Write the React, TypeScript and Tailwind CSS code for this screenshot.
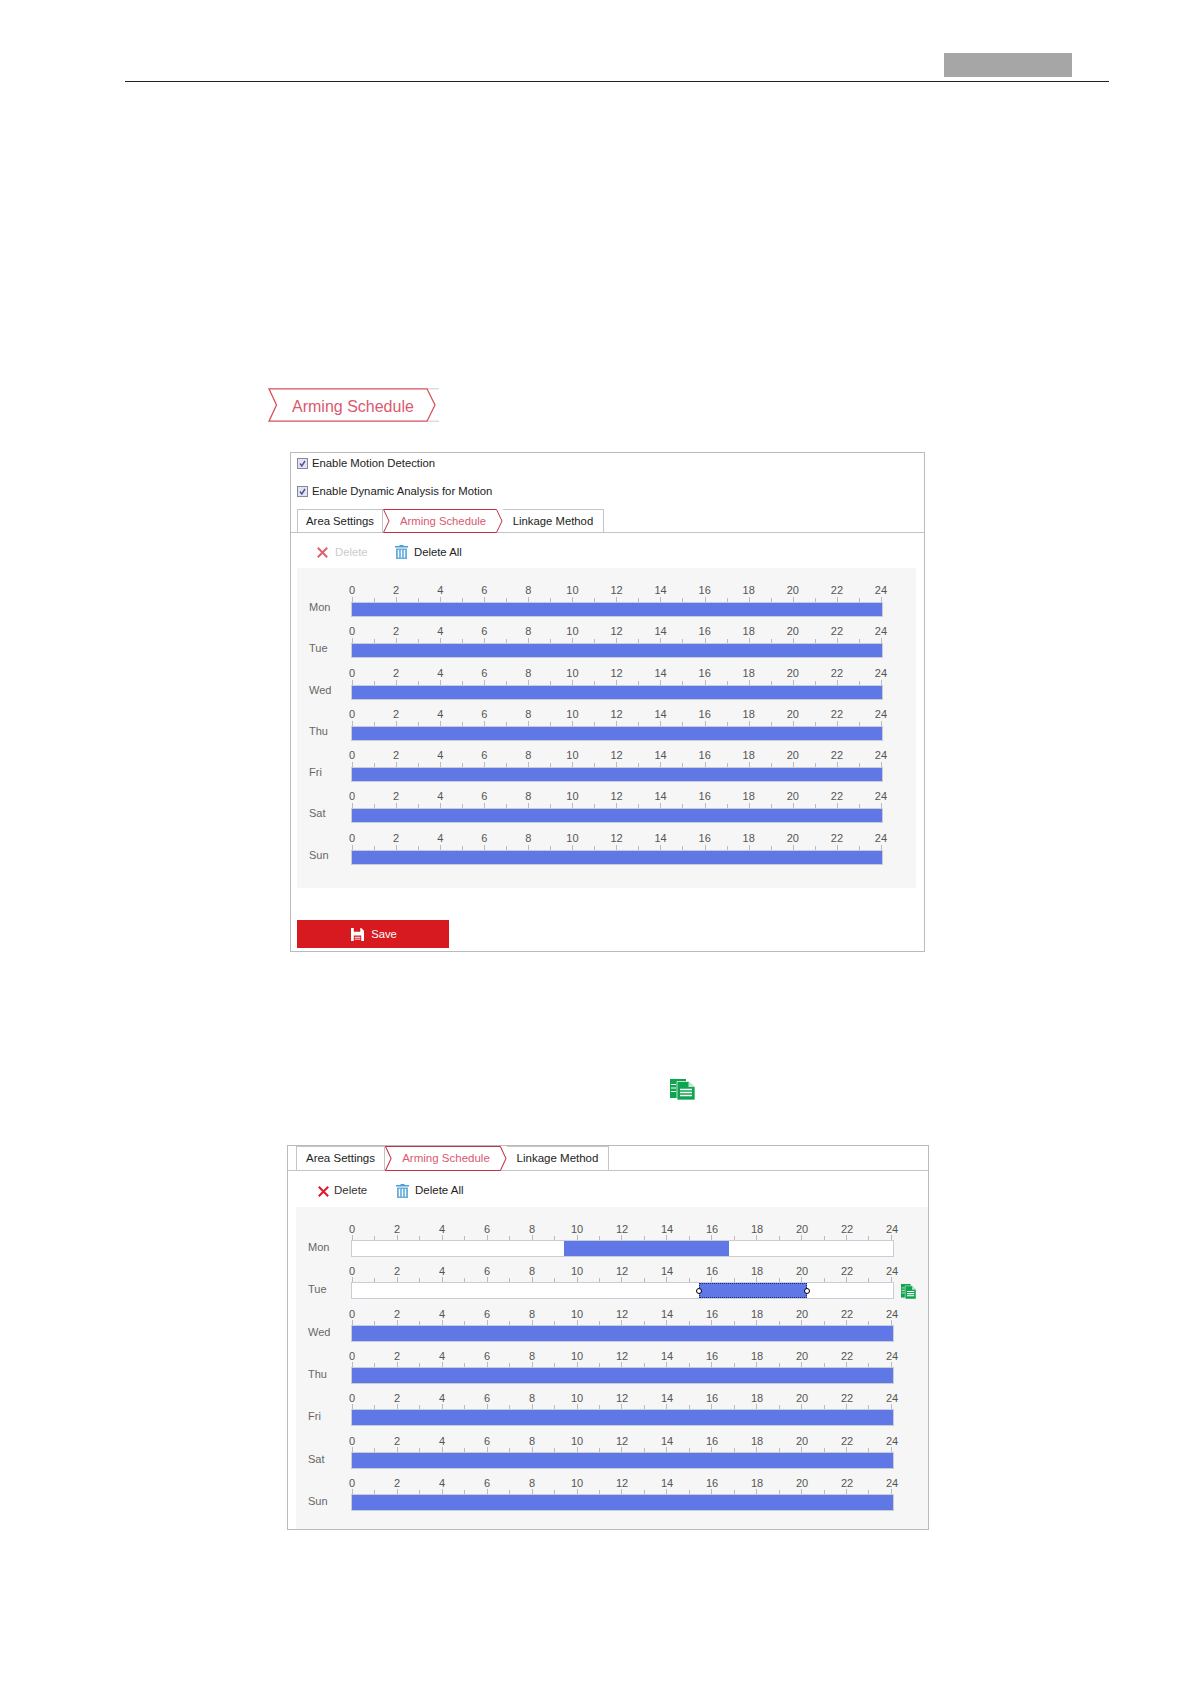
import type { ReactNode } from 'react';

const HOURS = [0, 2, 4, 6, 8, 10, 12, 14, 16, 18, 20, 22, 24];
const DAYS = ['Mon', 'Tue', 'Wed', 'Thu', 'Fri', 'Sat', 'Sun'];

const CopyIcon = ({ className }: { className: string }) => (
  <svg viewBox="0 0 25 21" preserveAspectRatio="none" className={className}>
    <path d="M0 0h16v19H0z" fill="#10a450" />
    <path d="M1 5.5h5M1 9h5M1 12.5h5" stroke="#fff" strokeWidth="1.1" />
    <path d="M7 2.5h11.5L25 8v13H7z" fill="#10a450" stroke="#fff" strokeWidth="0.7" />
    <path d="M18.5 3v5H25z" fill="#bfe8cf" />
    <path d="M10 10.5h12M10 13.5h12M10 16.5h12" stroke="#fff" strokeWidth="1.5" />
  </svg>
);

const CheckBox = () => (
  <svg viewBox="0 0 11 11" className="mr-[4px] h-[11px] w-[11px] shrink-0">
    <rect x="0.5" y="0.5" width="10" height="10" fill="#e3e4ef" stroke="#85879a" />
    <path d="M3 5.5L4.8 8L8 3" fill="none" stroke="#4b4f9c" strokeWidth="1.4" />
  </svg>
);

const DeleteIcon = ({ enabled }: { enabled: boolean }) => (
  <svg viewBox="0 0 11 11" className="h-[11px] w-[11px] shrink-0">
    <path d="M0.8 0.8L10.2 10.2M10.2 0.8L0.8 10.2" fill="none" stroke={enabled ? '#e0182d' : '#e0606f'} strokeWidth="2" />
  </svg>
);

const TrashIcon = () => (
  <svg viewBox="0 0 13 14" className="h-[14px] w-[13px] shrink-0">
    <path d="M4.5 0h4v1H13v1.5H0V1h4.5z" fill="#4f9fd6" />
    <path d="M1 3.5h11V14H1z" fill="#6aaedd" />
    <path d="M3.5 5v7.5M6.5 5v7.5M9.5 5v7.5" stroke="#fff" strokeWidth="1.3" />
  </svg>
);

const Tab = ({ children, className }: { children: string; className: string }) => (
  <div className={`flex items-center justify-center text-[#222] ${className}`}>{children}</div>
);

const ActiveTab = ({ children, className }: { children: string; className: string }) => (
  <div className={`relative flex items-center justify-center text-[#d9596f] ${className}`}>
    <svg viewBox="0 0 120 24" preserveAspectRatio="none" className="absolute inset-0 h-full w-full">
      <path d="M0.5 0.5H113.5L119 12L113.5 23.5H0.5L6 12Z" fill="#fff" stroke="#bf3348" />
    </svg>
    <span className="relative">{children}</span>
  </div>
);

const Ticks = ({ className }: { className: string }) => (
  <div className={`flex items-end justify-between ${className}`}>
    {Array.from({ length: 25 }, (_, i) => (
      <div key={i} className={`w-px bg-[#bbb] ${i % 2 === 0 ? 'h-[5px]' : 'h-[4px]'}`} />
    ))}
  </div>
);

interface RowProps {
  day: string;
  wide?: boolean;
  children?: ReactNode;
  extra?: ReactNode;
}

const ScheduleRow = ({ day, wide, children, extra }: RowProps) => (
  <div className="flex">
    <div
      className={`shrink-0 pl-[12px] text-[11px] leading-[16px] text-[#666] ${
        wide ? 'w-[55px] pt-[17px]' : 'w-[54px] pt-[16px]'
      }`}
    >
      {day}
    </div>
    <div className={wide ? 'w-[543px]' : 'w-[532px]'}>
      <div className={`flex h-[14px] text-center text-[11px] leading-[14px] text-[#555] ${wide ? '-ml-[21.5px]' : '-ml-[21px]'}`}>
        {HOURS.map((h) => (
          <span key={h} className={`shrink-0 ${wide ? 'w-[45px]' : 'w-[44.08px]'}`}>
            {h}
          </span>
        ))}
      </div>
      <Ticks className={wide ? 'ml-px h-[4px] w-[540px]' : 'ml-px h-[5px] w-[530px]'} />
      <div className={`flex border border-[#c8cdd8] bg-white ${wide ? 'h-[17px]' : 'h-[15px]'}`}>
        {children ?? <div className="w-full bg-[#5f78e6]" />}
      </div>
    </div>
    {extra}
  </div>
);

const Handle = ({ className }: { className: string }) => (
  <div className={`absolute top-1/2 h-[6px] w-[6px] -translate-y-1/2 rounded-full border border-black bg-white ${className}`} />
);

export default function App() {
  return (
    <div className="h-[1684px] overflow-hidden bg-white [font-family:'Liberation_Sans',Arial,sans-serif]">
      {/* page header */}
      <div className="ml-[125px] h-[82px] w-[984px] border-b border-[#222] pt-[53px]">
        <div className="ml-[819px] h-[24px] w-[128px] bg-[#a6a6a6]" />
      </div>

      {/* section chip */}
      <div className="relative ml-[268px] mt-[306px] flex h-[34px] w-[171px] items-center pl-[24px] pt-[3px] text-[16px] text-[#d9596f]">
        <svg viewBox="0 0 171 34" className="absolute inset-0 h-full w-full">
          <path d="M159 0.8H171M159 33.2H171" stroke="#ccc" fill="none" />
          <path d="M1 0.8H159L167 17L159 33.2H1L8.5 17Z" fill="none" stroke="#d9505f" strokeWidth="1.3" />
        </svg>
        <span className="relative">Arming Schedule</span>
      </div>

      {/* first settings panel */}
      <div className="ml-[290px] mt-[30px] h-[500px] w-[635px] border border-[#bbb] text-[11.3px] text-[#222]">
        <div className="flex h-[20px] items-center pl-[6px]">
          <CheckBox />
          Enable Motion Detection
        </div>
        <div className="mt-[8px] flex h-[20px] items-center pl-[6px]">
          <CheckBox />
          Enable Dynamic Analysis for Motion
        </div>
        <div className="mt-[8px] flex h-[24px] border-b border-[#c4c4c4] pl-[6px]">
          <Tab className="h-[24px] w-[86px] border border-[#c4c4c4]">Area Settings</Tab>
          <ActiveTab className="h-[24px] w-[120px]">Arming Schedule</ActiveTab>
          <Tab className="h-[24px] w-[101px] border border-l-0 border-[#c4c4c4]">Linkage Method</Tab>
        </div>
        <div className="flex h-[35px] items-center pl-[26px] pt-[3px]">
          <DeleteIcon enabled={false} />
          <span className="ml-[7px] w-[60px] text-[#ccc]">Delete</span>
          <TrashIcon />
          <span className="ml-[6px] text-[#222]">Delete All</span>
        </div>
        <div className="ml-[6px] mr-[8px] flex h-[320px] flex-col gap-[7.27px] bg-[#f6f6f6] pt-[15px]">
          {DAYS.map((d) => (
            <ScheduleRow key={d} day={d} />
          ))}
        </div>
        <button className="ml-[6px] mt-[32px] flex h-[28px] w-[152px] items-center justify-center gap-[7px] bg-[#d71920] pl-[2px] text-white">
          <svg viewBox="0 0 14 14" className="h-[13px] w-[13px]">
            <path d="M0 0h11l3 3v11H0z" fill="#fff" />
            <path d="M3 0h7v4H3zM3 8h8v6H3z" fill="#d71920" />
            <path d="M4 10h6M4 12h6" stroke="#fff" />
          </svg>
          Save
        </button>
      </div>

      {/* copy icon from the text */}
      <div className="ml-[670px] mt-[127px]">
        <CopyIcon className="h-[21px] w-[25px]" />
      </div>

      {/* second settings panel */}
      <div className="ml-[287px] mt-[45px] h-[385px] w-[642px] border border-[#bbb] text-[11.5px] text-[#222]">
        <div className="flex h-[25px] border-b border-[#c4c4c4] pl-[8px]">
          <Tab className="h-[25px] w-[89px] border border-[#c4c4c4] pt-[1px]">Area Settings</Tab>
          <ActiveTab className="h-[25px] w-[122px] pt-[1px]">Arming Schedule</ActiveTab>
          <Tab className="h-[25px] w-[102px] border border-l-0 border-[#c4c4c4] pt-[1px]">Linkage Method</Tab>
        </div>
        <div className="flex h-[36px] items-center pl-[30px] pt-[4px]">
          <DeleteIcon enabled />
          <span className="ml-[5px] w-[62px] text-[#333]">Delete</span>
          <TrashIcon />
          <span className="ml-[6px] text-[#222]">Delete All</span>
        </div>
        <div className="ml-[8px] flex h-[322px] flex-col gap-[7.33px] bg-[#f6f6f6] pt-[15px]">
          {DAYS.map((d) => {
            if (d === 'Mon') {
              return (
                <ScheduleRow key={d} day={d} wide>
                  <div className="w-[212px]" />
                  <div className="w-[165px] bg-[#5f78e6]" />
                </ScheduleRow>
              );
            }
            if (d === 'Tue') {
              return (
                <ScheduleRow
                  key={d}
                  day={d}
                  wide
                  extra={
                    <div className="ml-[7px] pt-[20px]">
                      <CopyIcon className="h-[15px] w-[15px]" />
                    </div>
                  }
                >
                  <div className="w-[347px]" />
                  <div className="relative w-[108px] border-x border-y border-dotted border-x-[#1c2a6a] border-y-[#1c2a6a] bg-[#5f78e6]">
                    <Handle className="-left-[4px]" />
                    <Handle className="-right-[4px]" />
                  </div>
                </ScheduleRow>
              );
            }
            return <ScheduleRow key={d} day={d} wide />;
          })}
        </div>
      </div>
    </div>
  );
}
